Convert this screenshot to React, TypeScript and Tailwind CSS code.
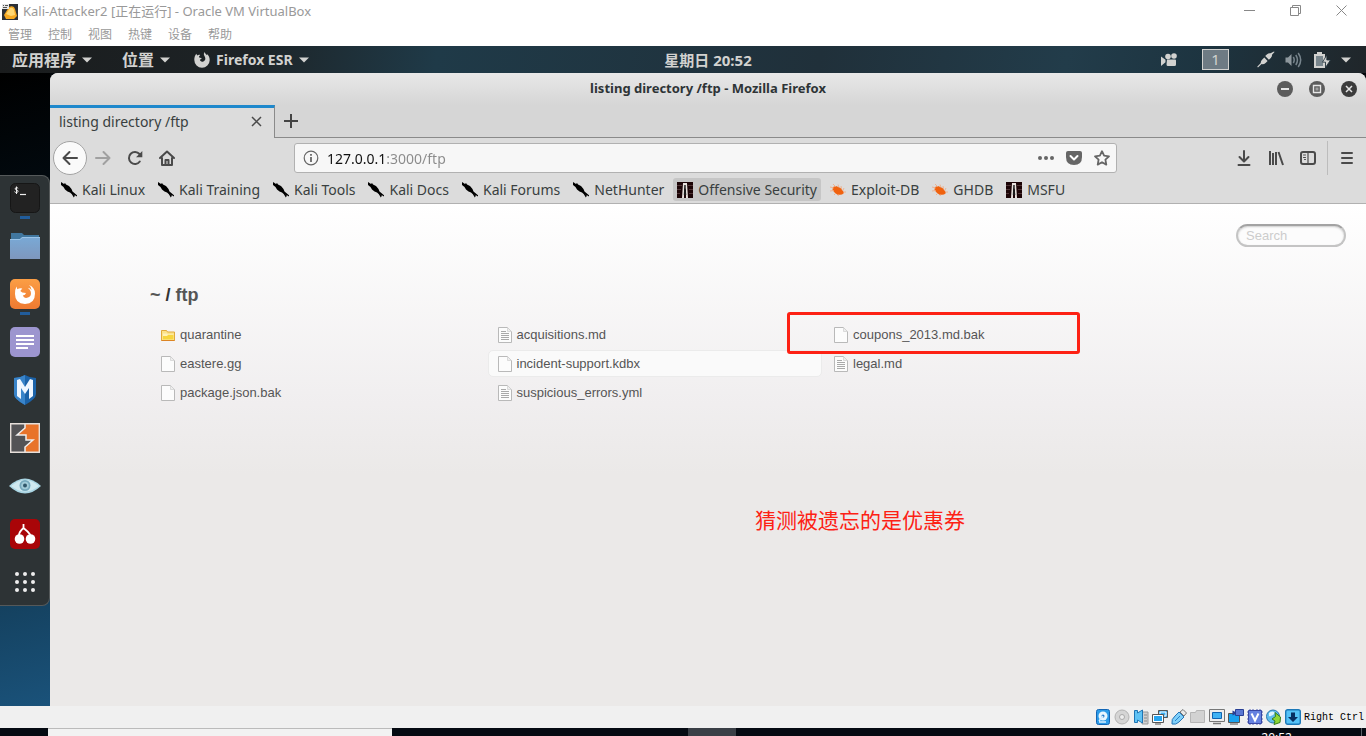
import React from 'react';

const UI = "font-['Noto_Sans','Noto_Sans_CJK_SC',sans-serif]";

function Caret() {
  return (
    <svg width="10" height="6" viewBox="0 0 10 6" aria-hidden="true">
      <path d="M0 .5h10L5 5.5z" fill="currentColor" />
    </svg>
  );
}

function VmTitleBar() {
  return (
    <header className="flex h-[23px] shrink-0 items-center bg-white pr-0.5 pl-0.5 text-[#999]">
      <svg width="16" height="16" viewBox="0 0 16 16" aria-hidden="true">
        <path d="M0 0h16v16H0z" fill="#2c3036" />
        <path d="M7 3q5-2 6 2l2 7-3 3H4l-2-4z" fill="#f6a821" />
        <path d="M8 4q3-1 4 2l1 5-4 1-5-2z" fill="#ffd772" />
        <path d="M0 0h7v5H0z" fill="#e6e6e6" />
        <path d="M1 1h1v1H1zM3 1h3v1H3zM1 3h4v1H1z" fill="#555" />
      </svg>
      <h1 className="ml-[5px] pb-0.5 text-[13px] leading-4">Kali-Attacker2 [正在运行] - Oracle VM VirtualBox</h1>
      <div className="ml-auto flex h-full pb-0.5">
        <button aria-label="最小化" className="flex w-[46px] items-center justify-center">
          <svg width="11" height="11" viewBox="0 0 11 11"><path d="M0 5.500h11" stroke="#888" /></svg>
        </button>
        <button aria-label="还原" className="flex w-[46px] items-center justify-center">
          <svg width="11" height="11" viewBox="0 0 11 11" fill="none" stroke="#888">
            <path d="M.5 2.500h8v8h-8zM2.500 2.500v-2h8v8h-2" />
          </svg>
        </button>
        <button aria-label="关闭" className="flex w-[46px] items-center justify-center">
          <svg width="11" height="11" viewBox="0 0 11 11"><path d="M.5.5l10 10M10.500.5l-10 10" stroke="#888" /></svg>
        </button>
      </div>
    </header>
  );
}

function VmMenu() {
  return (
    <nav className="flex h-[23px] shrink-0 items-center gap-4 bg-white px-2 text-xs text-[#999]">
      {['管理', '控制', '视图', '热键', '设备', '帮助'].map((m) => (
        <button key={m}>{m}</button>
      ))}
    </nav>
  );
}

function GnomeBar() {
  return (
    <div className="grid h-[27px] shrink-0 grid-cols-[1fr_auto_1fr] items-center bg-[linear-gradient(100deg,#1a1c1d_0%,#1d2326_18%,#1f3a48_32%,#20303a_60%,#223c4a_78%,#1d3440_88%,#20262a_100%)] text-[14px] font-bold text-[#d2d2d0]">
      <div className="flex items-center pl-3">
        <button className="flex items-center gap-1.5 text-[16px] leading-6">应用程序 <Caret /></button>
        <button className="ml-[30px] flex items-center gap-1.5 text-[16px] leading-6">位置 <Caret /></button>
        <button className="ml-6 flex items-center gap-1.5">
          <svg width="16" height="16" viewBox="0 0 16 16" aria-hidden="true">
            <path d="M8 15.800A7.800 7.800 0 0 1 .3 8C.2 5.400 1 3.200 2.400 1.700l.7 1.700C4 2.700 5 2.600 6.200 2.900L5 4.600l.5 1.100 2.100.2c-.1 1-1 1.300-1.700 1.700.1 1.800 2 2.500 3.500 1.800 1.500-.6 2.300-2 1.800-3.700-.3-1.200-1.200-2.100-1.400-3.600C10 1.300 10.200.7 10.700 0c.2 1.600 1.400 2.100 2.200 3l.5-.8c1.300 1.300 2.400 3.500 2.300 6A7.800 7.800 0 0 1 8 15.800z" fill="currentColor" />
          </svg>
          Firefox ESR <Caret />
        </button>
      </div>
      <div className="pl-[50px] text-[15px] leading-6">星期日 20:52</div>
      <div className="flex items-center justify-end pr-[15px]">
        <svg width="17" height="14" viewBox="0 0 17 14" fill="currentColor" aria-label="录像" role="img">
          <circle cx="7" cy="3.500" r="2.800" /><circle cx="13" cy="3" r="2.800" />
          <path d="M6 6.500h8q1 0 1 1v4q0 1.500-1.500 1.500H7q-1.500 0-1.500-1.500zM0 3.500l4.500 3.300v2.400L0 13z" />
        </svg>
        <button className="ml-6 h-[21px] w-[27px] border border-[#d2d2d0] bg-[#6e7b84] text-[15px] leading-[19px] font-normal">1</button>
        <svg className="ml-7" width="18" height="17" viewBox="0 0 18 17" fill="currentColor" aria-label="网络" role="img">
          <path d="M17 .5l.5.5-2.500 2.800q.3 2-1.500 3.400l-1.600 1.600L8.200 5.100l1.600-1.600q1.700-1.500 3.700-1.200zM7.300 6.500l3.300 3.400-2 2Q6.500 13.600 4.600 13L1 16.500l-.8-.8L3.800 12q-.3-2 1.500-3.500z" />
        </svg>
        <svg className="ml-2.5" width="17" height="16" viewBox="0 0 17 16" fill="none" stroke="#78858d" strokeWidth="1.500" aria-label="音量" role="img">
          <path d="M.5 5.500h2.500L6.500 2v12L3 10.500H.5z" fill="#8d979d" stroke="none" />
          <path d="M8.300 5q1.800 3 0 6M10.800 3q3.300 5 0 10M13.200 1q5 7 0 14" />
        </svg>
        <svg className="ml-3" width="17" height="16" viewBox="0 0 17 16" aria-label="电池" role="img">
          <path d="M3 0h5v2h3v14H0V2h3z" fill="currentColor" />
          <path d="M2 4h7v10H2z" fill="#79868d" />
          <path d="M12.800 3l-4.300 7.200h3v5.300l5-7.500h-3.700z" fill="currentColor" stroke="#20303a" strokeWidth=".8" />
        </svg>
        <span className="ml-2.5"><Caret /></span>
      </div>
    </div>
  );
}

const dock: { name: string; running?: boolean; art: React.ReactNode }[] = [
  {
    name: '终端',
    running: true,
    art: (
      <>
        <rect x=".5" y=".5" width="29" height="29" rx="5" fill="#222" stroke="#161616" />
        <path d="M10 11.500h6" stroke="#eee" strokeWidth="1.200" />
        <path d="M8.200 5.300q-.8-.8-2-.6-1.400.3-1 1.500.2.600 1.500.8 1.500.3 1.300 1.500-.2 1-1.500 1-1.300 0-2-.8M6.500 3.500v7.500" stroke="#eee" fill="none" />
      </>
    ),
  },
  {
    name: '文件',
    art: (
      <>
        <path d="M1 2h11l2 2h15v24H1z" fill="#41779f" />
        <path d="M0 8h10l2-2h18v22H0z" fill="url(#folder)" />
        <path d="M0 8.500h10.200l2-2H30" stroke="#9bc4e8" fill="none" />
      </>
    ),
  },
  {
    name: 'Firefox ESR',
    running: true,
    art: (
      <>
        <rect width="30" height="30" rx="5" fill="url(#fox)" />
        <path d="M6.500 7.500l.8 2.800q2.700-1.800 5-.7l-2 2.500 2 1.500 3.700.3q-.5 2-3.200 2.600 1 3 4.300 2.300 4.800-1 3.700-6-.5-2.200-3-4 2.400.3 3.800 2.500.3-3-2.600-5.300Q24.700 8 25 14.500 25 24.800 15 25 5 24.700 5 15q0-5 1.500-7.500z" fill="#fff" />
      </>
    ),
  },
  {
    name: '文本编辑器',
    art: (
      <>
        <rect width="30" height="30" rx="5" fill="#9c95cf" />
        <path d="M6 9h18M6 13h18M6 17h18M6 21h12" stroke="#fff" strokeWidth="2" />
      </>
    ),
  },
  {
    name: 'Metasploit',
    art: (
      <>
        <path d="M4 3Q10 3 15 0q5 3 11 3v16q0 5-11 11Q4 24 4 19z" fill="#1b62a8" />
        <path d="M4 3Q10 3 15 0v30Q4 24 4 19z" fill="#3984c9" />
        <path d="M7 21V5l3-1 5 8 5-8 3 1v16l-4 3V13l-4 6-4-6v11z" fill="#eef6ff" />
      </>
    ),
  },
  {
    name: 'Burp Suite',
    art: (
      <>
        <path d="M1 1h28v28H1z" fill="#e8732a" />
        <path d="M1 1h14v4L7 12h9v5h6l-7 7v5H1z" fill="#535356" />
        <path d="M15 1v4l-8 7h9v5h7l-8 7v5" fill="none" stroke="#eee" strokeWidth="1.500" />
        <path d="M.7.7h28.600v28.600H.7z" fill="none" stroke="#e6dfda" strokeWidth="1.400" />
      </>
    ),
  },
  {
    name: 'Zenmap',
    art: (
      <>
        <path d="M-1 15Q15 0 31 15 15 30 -1 15z" fill="#a9d5e3" />
        <path d="M1 15Q15 3 29 15 15 26 1 15z" fill="#cfe9f0" />
        <circle cx="15" cy="14.500" r="5.500" fill="#76a9bd" />
        <circle cx="15" cy="14.500" r="3.800" fill="#a3ccd9" />
        <circle cx="15" cy="14.500" r="2" fill="#31586b" />
      </>
    ),
  },
  {
    name: 'CherryTree',
    art: (
      <>
        <rect width="30" height="30" rx="5" fill="#a90508" />
        <circle cx="9.500" cy="20" r="4.800" fill="#fff" />
        <circle cx="20.500" cy="20" r="4.800" fill="#fff" />
        <path d="M9 16q0-3 4.500-7V5M13.500 9q4 3 7 7" fill="none" stroke="#fff" strokeWidth="1.800" />
      </>
    ),
  },
  {
    name: '显示应用程序',
    art: (
      <g fill="#eee">
        {[7, 15, 23].map((y) => [7, 15, 23].map((x) => <circle key={`${x}-${y}`} cx={x} cy={y} r="2" />))}
      </g>
    ),
  },
];

function Dock() {
  return (
    <aside className="w-[50px] shrink-0 bg-[linear-gradient(165deg,#000_0%,#020a10_20%,#123a54_75%,#1a527a_100%)] pt-[102px]">
      <div className="flex flex-col items-center rounded-r-lg border border-l-0 border-[#55595a] bg-[#2d3335]">
        {dock.map((d, i) => (
          <button key={d.name} aria-label={d.name} className={i === 8 ? 'flex h-[46px] flex-col items-center pt-2' : i === 0 ? 'flex h-[47px] flex-col items-center pt-[7px]' : 'flex h-12 flex-col items-center pt-2'}>
            <svg width="30" height="30" viewBox="0 0 30 30" className="overflow-visible" aria-hidden="true">
              <defs>
                <linearGradient id="folder" x2="0" y2="1"><stop stopColor="#79a9d6" /><stop offset="1" stopColor="#7e97bd" /></linearGradient>
                <linearGradient id="fox" x2="0" y2="1"><stop stopColor="#fb9e45" /><stop offset="1" stopColor="#ef7a31" /></linearGradient>
              </defs>
              {d.art}
            </svg>
            {d.running && <span className="mt-[3px] h-[3px] w-2.5 bg-[#215d9c]" />}
          </button>
        ))}
      </div>
    </aside>
  );
}

function WindowBar() {
  const round = 'flex size-4 items-center justify-center rounded-full text-[#e6e6e6]';
  return (
    <div className="grid h-8 grid-cols-[1fr_auto_1fr] items-center bg-linear-to-b from-[#e8e8e8] to-[#d6d6d6] px-[9px]">
      <span />
      <h2 className="text-[13px] font-bold text-[#2e3436]">listing directory /ftp - Mozilla Firefox</h2>
      <div className="flex items-center justify-end gap-4">
        <button aria-label="最小化" className={`${round} bg-[#5c5c5c]`}>
          <svg width="16" height="16" viewBox="0 0 16 16"><path d="M4 8h8" stroke="currentColor" strokeWidth="2" /></svg>
        </button>
        <button aria-label="最大化" className={`${round} bg-[#5c5c5c]`}>
          <svg width="16" height="16" viewBox="0 0 16 16"><path d="M4.500 4.500h7v7h-7z" stroke="currentColor" fill="none" strokeWidth="1.400" /><path d="M6.500 6.500h3v3h-3z" fill="#a0a0a0" /></svg>
        </button>
        <button aria-label="关闭" className={`${round} bg-[#3c3c3c]`}>
          <svg width="16" height="16" viewBox="0 0 16 16"><path d="M5 5l6 6M11 5l-6 6" stroke="currentColor" strokeWidth="1.500" /></svg>
        </button>
      </div>
    </div>
  );
}

function Tabs() {
  return (
    <div className="flex h-[33px] bg-[#d6d6d6]">
      <div className="flex w-[225px] items-center border-t-3 border-r border-t-[#1e88cc] border-r-[#8a8a8a] bg-[#dcdcdc] pr-3 pb-[3px] pl-[9px]">
        <span className="text-[14px] text-[#393f40]">listing directory /ftp</span>
        <button aria-label="关闭标签页" className="ml-auto">
          <svg width="11" height="11" viewBox="0 0 11 11"><path d="M1 1l9 9M10 1l-9 9" stroke="#4a4a4a" strokeWidth="1.500" /></svg>
        </button>
      </div>
      <div className="flex flex-1 items-center border-b border-[#8a8a8a] pl-[9px]">
        <button aria-label="新标签页">
          <svg width="14" height="14" viewBox="0 0 14 14"><path d="M7 0v14M0 7h14" stroke="#444" strokeWidth="2" /></svg>
        </button>
      </div>
    </div>
  );
}

const stroke = { fill: 'none', stroke: 'currentColor', strokeWidth: 2, strokeLinecap: 'round', strokeLinejoin: 'round' } as const;

function NavBar() {
  const tool = 'flex w-8 justify-center';
  return (
    <div className="flex h-10 items-center bg-[#dcdcdc] pl-[3px] text-[#4a4a4a]">
      <button aria-label="后退" className="flex size-[34px] items-center justify-center rounded-full border border-[#a3a3a3] bg-[#fafafa]">
        <svg width="16" height="16" viewBox="0 0 16 16" {...stroke}><path d="M15 8H1.500M7.500 2l-6 6 6 6" /></svg>
      </button>
      <button aria-label="前进" className={`${tool} text-[#a0a0a0]`}>
        <svg width="16" height="16" viewBox="0 0 16 16" {...stroke}><path d="M1 8h13.500M8.500 2l6 6-6 6" /></svg>
      </button>
      <button aria-label="刷新" className={tool}>
        <svg width="16" height="16" viewBox="0 0 16 16" {...stroke}><path d="M12.800 11.500A6 6 0 1 1 12.500 4l1 1.200" /><path d="M15.300 1v6.300H9z" fill="currentColor" stroke="none" /></svg>
      </button>
      <button aria-label="主页" className={tool}>
        <svg width="16" height="16" viewBox="0 0 16 16" {...stroke}><path d="M1 8l7-6.500L15 8M3 8v7h10V8" /><path d="M6.500 14.500V10h3v4.500" /></svg>
      </button>
      <div className="mx-[111px] flex h-[30px] min-w-0 flex-1 items-center rounded-[3px] border border-[#b1b1b1] bg-[#f7f7f7] pl-2">
        <svg className="shrink-0" width="16" height="16" viewBox="0 0 16 16" fill="none" stroke="#666" aria-hidden="true">
          <circle cx="8" cy="8" r="6.800" strokeWidth="1.200" /><path d="M8 7v5M8 4v1.800" strokeWidth="1.800" />
        </svg>
        <input
          aria-label="地址"
          defaultValue="127.0.0.1:3000/ftp"
          className="ml-2 min-w-0 flex-1 bg-[linear-gradient(90deg,#111_59px,#8a8a8a_59px)] bg-clip-text text-[14px] text-transparent outline-none"
        />
        <button aria-label="页面操作" className="flex w-7 justify-center">
          <svg width="16" height="16" viewBox="0 0 16 16" fill="#666"><circle cx="2" cy="8" r="2" /><circle cx="8" cy="8" r="2" /><circle cx="14" cy="8" r="2" /></svg>
        </button>
        <button aria-label="Pocket" className="flex w-7 justify-center">
          <svg width="16" height="16" viewBox="0 0 16 16"><path d="M2 1h12q2 0 2 2v4q0 8-8 8T0 7V3q0-2 2-2z" fill="#666" /><path d="M4.500 6L8 9.500 11.500 6" fill="none" stroke="#fff" strokeWidth="2" strokeLinecap="round" strokeLinejoin="round" /></svg>
        </button>
        <button aria-label="收藏" className="flex w-7 justify-center">
          <svg width="16" height="16" viewBox="0 0 16 16"><path d="M8 1.200l2.100 4.500 4.900.6-3.600 3.400.9 4.900L8 12.200l-4.300 2.400.9-4.900L1 6.300l4.900-.6z" fill="none" stroke="#666" strokeWidth="1.800" strokeLinejoin="round" /></svg>
        </button>
      </div>
      <button aria-label="下载" className={tool}>
        <svg width="16" height="16" viewBox="0 0 16 16" {...stroke}><path d="M8 1v10M3.500 7L8 11.500 12.500 7M2.500 15h11" /></svg>
      </button>
      <button aria-label="书库" className={tool}>
        <svg width="16" height="16" viewBox="0 0 16 16" {...stroke} strokeLinecap="butt"><path d="M2 1v14M5 3v12M8 2v13M10.500 2l4.500 13" /></svg>
      </button>
      <button aria-label="侧栏" className={tool}>
        <svg width="16" height="16" viewBox="0 0 16 16" {...stroke}><rect x="1" y="2" width="14" height="12" rx="2" /><path d="M8 2v12" strokeWidth="1.200" /><path d="M3.500 5h2M3.500 7.500h2M4.500 9.500h1" strokeWidth="1" /></svg>
      </button>
      <span className="ml-[3px] h-[34px] w-px bg-[#bcbcbc]" />
      <button aria-label="菜单" className="flex w-[38px] justify-center">
        <svg width="12" height="12" viewBox="0 0 12 12" {...stroke}><path d="M1 1h10M1 6h10M1 11h10" /></svg>
      </button>
    </div>
  );
}

function KaliIcon() {
  return (
    <svg width="16" height="16" viewBox="0 0 16 16" aria-hidden="true">
      <path d="M0 0l3 2 1-1 1 1.500L8 4l2.500 3 1 2.500 4.500 3.800v1.200l-2.500-1.500-2-.2L9 10.500 6.500 9.500 4 7.500 2.500 5 0 3z" />
      <path d="M10.500 11.500l2.300 4 1.200-2z" />
    </svg>
  );
}

function OffsecIcon() {
  return (
    <svg width="16" height="16" viewBox="0 0 16 16" aria-hidden="true">
      <path d="M0 0h16v16H0z" fill="#1c0507" />
      <path d="M0 3h5v1H0zM0 7h4v1H0zM11 3h5v1h-5zM12 7h4v1h-4zM0 11h3v1H0zM12 11h4v1h-4z" fill="#4f3436" />
      <path d="M6 1h4l1 15H9V8L8 6 7 8v8H5z" fill="#e9e3df" />
      <path d="M7.300 3h1.400v4l.6 6H6.800z" fill="#1a1a1a" />
    </svg>
  );
}

function BugIcon() {
  return (
    <svg width="16" height="16" viewBox="0 0 16 16" aria-hidden="true">
      <path d="M3 5l3-1 4.500 2 2.500 3 1 2-2 1.500-4 .5L5 11 2.500 8z" fill="#f0620f" />
      <path d="M0 5l4 1M0 9l4-.5M3 2l3 3M8 2.500l1 3M11 4l.5 3M14 6l-1.500 3M4 13l2-2M8 14l1-2M13 10h3" stroke="#f0a880" strokeWidth=".8" fill="none" />
    </svg>
  );
}

const bookmarks: [string, 'kali' | 'off' | 'bug', boolean?][] = [
  ['Kali Linux', 'kali'], ['Kali Training', 'kali'], ['Kali Tools', 'kali'], ['Kali Docs', 'kali'], ['Kali Forums', 'kali'],
  ['NetHunter', 'kali'], ['Offensive Security', 'off', true], ['Exploit-DB', 'bug'], ['GHDB', 'bug'], ['MSFU', 'off'],
];

function Bookmarks() {
  return (
    <nav className="flex h-[26px] items-center gap-[5px] border-b border-[#b1b1b1] bg-[#dcdcdc] pb-0.5 pl-[7px] text-[14px] text-[#393f40]">
      {bookmarks.map(([label, icon, hot]) => (
        <a key={label} href="#" className={`flex h-[23px] items-center gap-[5px] rounded-[3px] px-1 whitespace-nowrap ${hot ? 'bg-[#c6c6c6]' : ''}`}>
          {icon === 'kali' ? <KaliIcon /> : icon === 'off' ? <OffsecIcon /> : <BugIcon />}
          {label}
        </a>
      ))}
    </nav>
  );
}

function FileIcon({ kind }: { kind: 'dir' | 'text' | 'blank' }) {
  if (kind === 'dir') {
    return (
      <svg width="16" height="16" viewBox="0 0 16 16" aria-hidden="true">
        <path d="M1.500 3.500h5l1 1.500h7v8.500h-13z" fill="#fbe28a" stroke="#e0a93b" />
        <path d="M3 6.500h4l1 1h5.500v5H3z" fill="#fff1b8" /><path d="M3 9h4l1-1h5.500v4.500H3z" fill="#f7d53e" />
        <path d="M1.500 13.500h13" stroke="#dc8424" />
      </svg>
    );
  }
  return (
    <svg width="16" height="16" viewBox="0 0 16 16" aria-hidden="true">
      <path d="M1.500 .5h9l4 4v11h-13z" fill="#fcfcfc" stroke="#b9b9b9" />
      <path d="M10.500 .5l4 4h-4z" fill="#eee" stroke="#cfcfcf" strokeWidth=".7" />
      {kind === 'text' && <path d="M4 4.500h5M4 6.500h8M4 8.500h8M4 10.500h8M4 12.500h8" stroke="#a9a9a9" />}
    </svg>
  );
}

const files: [string, 'dir' | 'text' | 'blank'][] = [
  ['quarantine', 'dir'], ['acquisitions.md', 'text'], ['coupons_2013.md.bak', 'blank'],
  ['eastere.gg', 'blank'], ['incident-support.kdbx', 'blank'], ['legal.md', 'text'],
  ['package.json.bak', 'blank'], ['suspicious_errors.yml', 'text'],
];

function Page() {
  return (
    <main className="relative min-h-0 flex-1 bg-[linear-gradient(180deg,#fff_0px,#f0eeef_200px,#ebe9e8_270px)] font-['Liberation_Sans',Arial,sans-serif] text-[13px] text-[#555]">
      <div className="flex justify-end px-5 pt-5">
        <input
          type="search"
          aria-label="Search"
          placeholder="Search"
          className="h-[23px] w-[110px] rounded-full border-2 border-[#c4c4c4] border-t-[#a3a3a3] bg-[#fcfcfc] px-2 text-[13px] shadow-[inset_0_1px_2px_#ccc] outline-none placeholder:text-[#ccc]"
        />
      </div>
      <div className="px-[100px] pt-9">
        <h1 className="text-lg leading-6 font-bold text-[#333]">
          <a href="#" className="text-[#555]">~</a> / <a href="#" className="text-[#555]">ftp</a>
        </h1>
        <ul className="mt-3.5 flex flex-wrap gap-0.5 pl-px">
          {files.map(([name, kind]) => (
            <li key={name} className="w-[30%]">
              <a href="#" className={`flex h-[27px] items-center gap-1 rounded-[5px] border px-2 ${name === 'incident-support.kdbx' ? 'border-[#ebebeb] bg-[#fafafa]' : 'border-transparent'}`}>
                <FileIcon kind={kind} />
                {name}
              </a>
            </li>
          ))}
        </ul>
      </div>
      <div className="absolute top-[108px] left-[737px] h-[42px] w-[293px] rounded-[3px] border-3 border-[#fd2114]" />
      <p className="absolute top-[300px] left-[705px] font-['Noto_Sans_CJK_SC',sans-serif] text-[21px] leading-[30px] text-[#fd2114]">猜测被遗忘的是优惠券</p>
    </main>
  );
}

const statusIcons: { name: string; art: React.ReactNode }[] = [
  { name: '硬盘', art: <><rect x="1.500" y=".5" width="13" height="15" rx="2" fill="#2b9be8" stroke="#1265b5" /><circle cx="8" cy="7" r="4.500" fill="#e8f6ff" /><circle cx="8" cy="7" r="1.500" fill="#1d78c9" /><path d="M8 7l-4 5M4 13h7" stroke="#d9efff" strokeWidth="1.500" /></> },
  { name: '光盘', art: <><circle cx="8" cy="8" r="7" fill="#d5d5d5" stroke="#b3b3b3" /><circle cx="8" cy="8" r="2.500" fill="#eee" stroke="#aaa" /></> },
  { name: '声音', art: <><path d="M9 3h6v12H9z" fill="#d0d0d0" stroke="#999" /><path d="M11 6h3M11 9h3M11 12h3" stroke="#888" /><path d="M1.500 1.500h3V4l5-3v13l-5-3v2.500h-3z" fill="#5fc3f5" stroke="#1f75b4" /></> },
  { name: '网络', art: <><path d="M6.500 1.500h9v7h-9z" fill="#34a5ec" stroke="#555" /><path d="M8 3h6v4H8z" fill="#3cb0f5" stroke="#fff" /><path d="M1.500 6.500h9v6h-9z" fill="#25a4ef" stroke="#fff" /><path d="M.5 5.500h11v8H.5zM3 15h6" fill="none" stroke="#555" /></> },
  { name: 'USB', art: <><path d="M1 15q-1-5 3-8l4-4 5 5-5 5q-3 3-7 2z" fill="#7fd0fa" stroke="#2675b6" /><path d="M9 3l3-2.500L15.500 4l-2.500 3z" fill="#e9e9e9" stroke="#777" /><path d="M4 12l5-5" stroke="#2883c9" /></> },
  { name: '共享文件夹', art: <path d="M.5 13.500v-10h5l1-2h8v12z" fill="#d2d2d2" stroke="#b5b5b5" /> },
  { name: '显示', art: <><path d="M.5 .5h15v12H.5z" fill="#eee" stroke="#777" /><path d="M3.500 3.500h9v6h-9z" fill="#41b3f4" stroke="#0f64b3" /><path d="M4 14.500h8" stroke="#777" strokeWidth="1.500" /></> },
  { name: '录像', art: <><path d="M.5 4.500h11v9H.5z" fill="#19a1ee" stroke="#555" /><path d="M7.500 .5h8v6h-8z" fill="#5977d3" stroke="#293f95" /><path d="M2 15h8" stroke="#555" /><path d="M4.500 1.500l3 1.500v2l-3 1.500z" fill="#293f95" /></> },
  { name: '处理器', art: <><path d="M3 0v16M6 0v16M10 0v16M13 0v16M0 3h16M0 6h16M0 10h16M0 13h16" stroke="#5260b4" /><path d="M1.500 1.500h13v13h-13z" fill="#6682e0" stroke="#3847a5" /><path d="M4.500 4.500L8 11.500l3.500-7" fill="none" stroke="#fff" strokeWidth="2" /></> },
  { name: '鼠标集成', art: <><circle cx="7" cy="7.500" r="6.500" fill="#60bdec" stroke="#2875ac" /><path d="M3 4q4-3 6 0-3 4-6 3z" fill="#dff4ff" /><path d="M9 3.500l5.500 4.500-.5 5.500-6 2 1-3.500-3-2 3.500-2.500z" fill="#8ed636" stroke="#347d1c" /></> },
  { name: '键盘', art: <><rect x=".7" y=".7" width="14.600" height="14.600" rx="2" fill="#55c2f7" stroke="#1c78b8" strokeWidth="1.400" /><path d="M6 3.500h4V8h3l-5 5-5-5h3z" fill="#082f62" /></> },
];

function StatusBar() {
  return (
    <footer className="flex h-[22px] shrink-0 items-center justify-end gap-[3px] bg-[#f0f0f0] pr-0.5">
      {statusIcons.map((s) => (
        <button key={s.name} aria-label={s.name}>
          <svg width="16" height="16" viewBox="0 0 16 16" aria-hidden="true">{s.art}</svg>
        </button>
      ))}
      <span className="font-['Liberation_Mono',monospace] text-[10px] text-black">Right Ctrl</span>
    </footer>
  );
}

function HostTaskbar() {
  return (
    <div className="flex h-2 shrink-0 overflow-hidden bg-[#050a12]">
      <div className="ml-12 w-[344px] border-t border-[#bbb] bg-[#f2f2f2]" />
      <div className="ml-[296px] w-12 bg-[#3a3f46]" />
      <time className="mt-0.5 ml-auto text-[12px] leading-4 text-white">20:52</time>
      <div className="mr-1 ml-[69px] w-px bg-[#5b6067]" />
    </div>
  );
}

export default function App() {
  return (
    <div className={`flex h-screen flex-col overflow-hidden ${UI}`}>
      <VmTitleBar />
      <VmMenu />
      <GnomeBar />
      <div className="flex min-h-0 flex-1 bg-[#03080c]">
        <Dock />
        <section className="flex min-w-0 flex-1 flex-col overflow-hidden rounded-t-lg bg-[#dcdcdc]">
          <WindowBar />
          <Tabs />
          <NavBar />
          <Bookmarks />
          <Page />
        </section>
      </div>
      <StatusBar />
      <HostTaskbar />
    </div>
  );
}
